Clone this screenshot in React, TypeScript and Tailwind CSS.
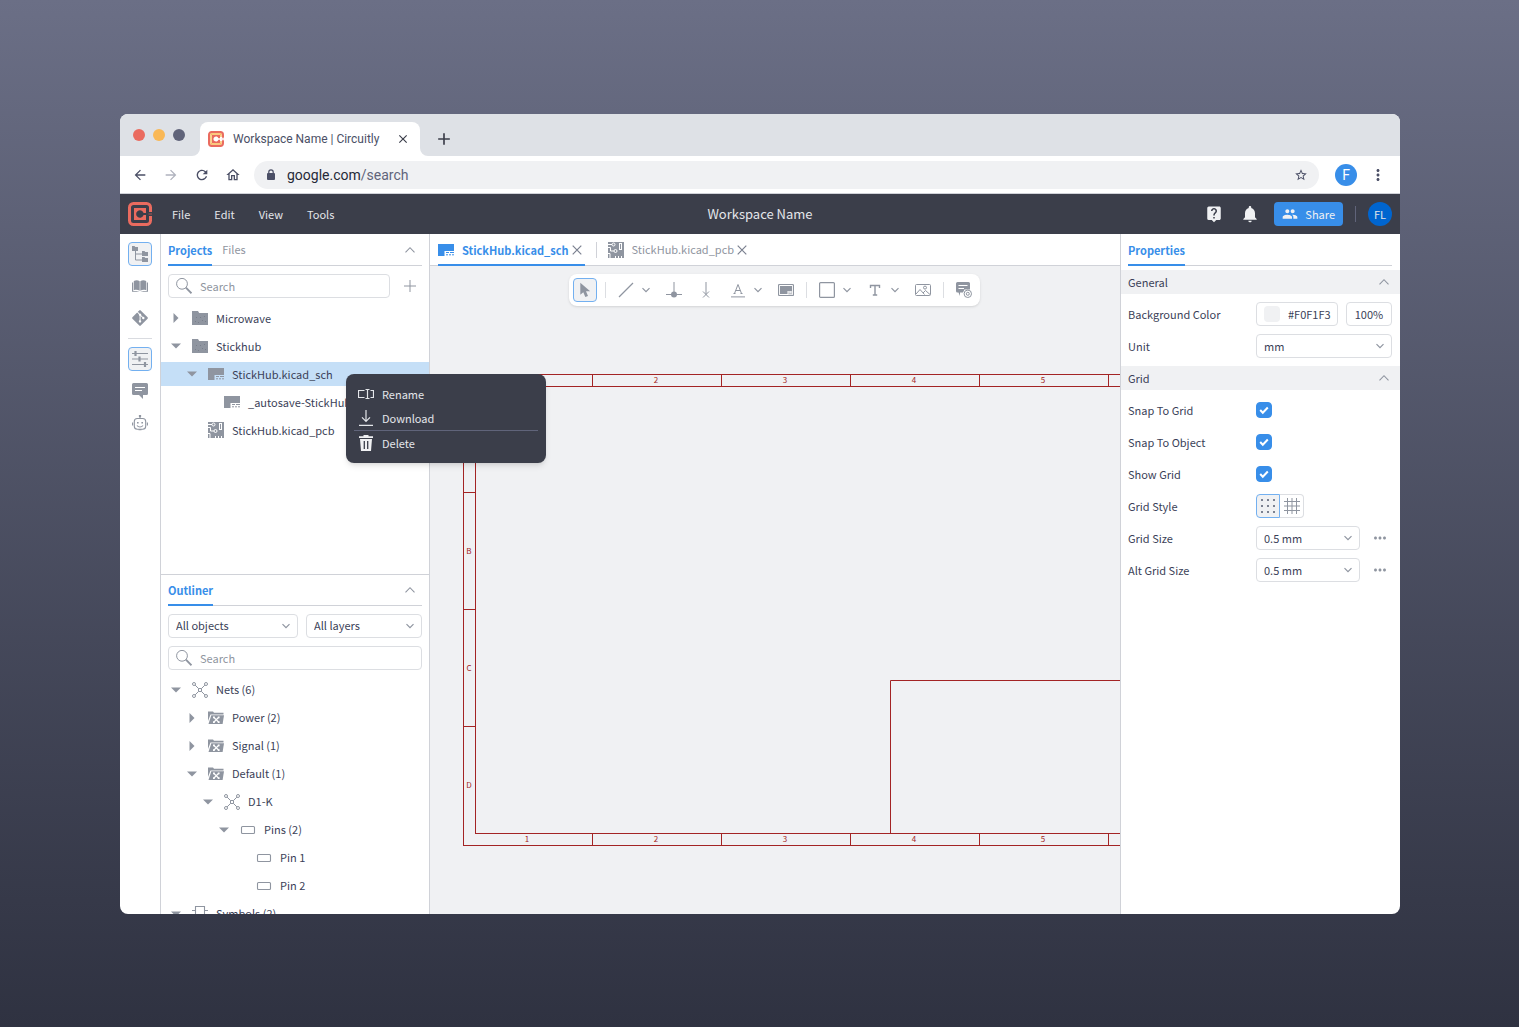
import { useState, type ReactNode } from "react";
import {
  MdAdd,
  MdArrowBack,
  MdArrowForward,
  MdClose,
  MdGroup,
  MdLiveHelp,
  MdMoreHoriz,
  MdMoreVert,
  MdNotifications,
  MdOutlineHome,
  MdRefresh,
  MdStarBorder,
} from "react-icons/md";
import { FaGitAlt } from "react-icons/fa";

type IconProps = { className?: string };

const Logo = ({ className = "size-6", glow = false }: IconProps & { glow?: boolean }) => (
  <svg viewBox="0 0 24 24" fill="none" className={className} aria-hidden="true">
    {glow && <path d="M19.500 9V4.500h-15v15h15V15" stroke="#f9b856" strokeWidth="2" />}
    <path d="M22.500 10V5.500a4 4 0 0 0-4-4h-13a4 4 0 0 0-4 4v13a4 4 0 0 0 4 4h13a4 4 0 0 0 4-4V14" stroke="#ea6b5f" strokeWidth="3" />
    <path d="M6 6h12v5h-2.400a3.800 3.800 0 1 0 0 2H18v5H6z" fill="#ea6b5f" />
    <path d="M20.500 12H24" stroke="#ea6b5f" opacity=".6" />
  </svg>
);

const Chevron = ({ className = "" }: IconProps) => (
  <svg viewBox="0 0 16 16" fill="none" stroke="currentColor" strokeWidth="1.200" className={`size-4 text-[#8f95a0] ${className}`} aria-hidden="true">
    <path d="M4.500 6.200 8 9.700l3.500-3.500" />
  </svg>
);

const ChevronUp = () => (
  <svg viewBox="0 0 16 16" fill="none" stroke="currentColor" strokeWidth="1.100" className="size-4 text-[#8f95a0]" aria-hidden="true">
    <path d="m3.500 10.300 4.500-4.600 4.500 4.600" />
  </svg>
);

const Cross = () => (
  <svg viewBox="0 0 16 16" fill="none" stroke="currentColor" strokeWidth="1.200" className="size-4 text-[#7b8190]" aria-hidden="true">
    <path d="m3.700 3.700 8.600 8.600M12.300 3.700l-8.600 8.600" />
  </svg>
);

const Folder = () => (
  <svg viewBox="0 0 16 16" className="size-4" aria-hidden="true">
    <path d="M0 1h6l1.200 2H16v12H0z" fill="currentColor" />
    <path d="M4 7.500h1M8 7.500h1M12 6.500h1M10 10.500h1M3 11.500h1M6 12.500h1M13 11.500h1" stroke="#6c7280" opacity=".6" />
  </svg>
);

const NetFolder = () => (
  <svg viewBox="0 0 16 16" className="size-4" aria-hidden="true">
    <path d="M0 1.500h5l1 1.300h9.500v1.700H2.500L0 11z" fill="currentColor" />
    <path d="M3.300 5.300H16L14.600 14H.5z" fill="currentColor" />
    <path d="m6 7.500 4.500 4.500M10.500 7.500 6 12" stroke="#fff" strokeWidth="1.200" />
    <path d="M5 6.600h1.800v1.700H5zM9.800 6.600h1.800v1.700H9.800zM5 11.300h1.800V13H5zM9.800 11.300h1.800V13H9.800z" fill="#fff" />
  </svg>
);

const SchFile = () => (
  <svg viewBox="0 0 16 16" className="size-4" aria-hidden="true">
    <path d="M0 2h16v7H6.500v5H0z" fill="currentColor" />
    <path d="M8 10.500h3M12 10.500h4M8 12.800h2M11 12.800h2M14 12.800h2" stroke="currentColor" />
  </svg>
);

const PcbFile = () => (
  <svg viewBox="0 0 16 16" className="size-4" aria-hidden="true">
    <path d="M0 0h16v16H0z" fill="currentColor" />
    <g stroke="#fff" fill="none">
      <path d="M0 2.500h4M0 5.500h2.500v3.500H6M0 11.500h2V16" />
      <circle cx="5.500" cy="2.500" r="1.500" />
      <circle cx="7.500" cy="9" r="1.500" />
      <rect x="11.500" y="1.500" width="2" height="6" />
      <path d="M7.500 14v2M10.500 14v2M13.500 14v2" />
    </g>
  </svg>
);

const Net = () => (
  <svg viewBox="0 0 16 16" fill="none" stroke="currentColor" className="size-4" aria-hidden="true">
    <circle cx="2" cy="2" r="1.500" />
    <circle cx="14" cy="2" r="1.500" />
    <circle cx="2" cy="14" r="1.500" />
    <circle cx="14" cy="14" r="1.500" />
    <path d="M6.500 6.500h3v3h-3zM3.100 3.100l3.400 3.400M12.900 3.100 9.500 6.500M3.100 12.900l3.400-3.400M12.900 12.900 9.500 9.500" />
  </svg>
);

const Pin = () => (
  <svg viewBox="0 0 16 16" fill="none" stroke="currentColor" strokeWidth="1.100" className="size-4" aria-hidden="true">
    <rect x="1.500" y="4.500" width="13" height="7" rx="1" />
  </svg>
);

const SymbolIcon = () => (
  <svg viewBox="0 0 16 16" fill="none" stroke="currentColor" strokeWidth="1.100" className="size-4" aria-hidden="true">
    <path d="M3.500.500h9v15h-9zM0 4.500h3.500M12.500 4.500H16M0 11.500h3.500M12.500 11.500H16" />
  </svg>
);

const Magnifier = () => (
  <svg viewBox="0 0 16 16" fill="none" stroke="currentColor" className="pointer-events-none absolute left-2 top-1 size-4 text-[#8f95a0]" aria-hidden="true">
    <circle cx="6" cy="5.800" r="5.400" />
    <path d="m9.900 9.700 5.600 5.600" strokeWidth="1.900" />
  </svg>
);

const Comment = () => (
  <svg viewBox="0 0 16 16" className="size-4" aria-hidden="true">
    <path d="M1.500 0h13A1.500 1.500 0 0 1 16 1.500v9a1.500 1.500 0 0 1-1.500 1.500H11v4l-4-4H1.500A1.500 1.500 0 0 1 0 10.500v-9A1.500 1.500 0 0 1 1.500 0z" fill="currentColor" />
    <path d="M3 4.500h10M3 7.500h7" stroke="#fff" strokeWidth="1.200" />
  </svg>
);

const railTop = [
  {
    label: "Project tree",
    active: true,
    icon: (
      <svg viewBox="0 0 16 16" fill="currentColor" className="size-4" aria-hidden="true">
        <path d="M0 0h2.500l.8 1H6v4H0zM10 5h2.500l.8 1H16v4h-6zM10 11h2.500l.8 1H16v4h-6z" />
        <path d="M3.500 5v9H10M3.500 8H10" fill="none" stroke="currentColor" />
      </svg>
    ),
  },
  {
    label: "Library",
    icon: (
      <svg viewBox="0 0 16 16" fill="currentColor" className="size-4" aria-hidden="true">
        <path d="M1.800 3C4 2 6 2.200 7.700 3.200v9.600C6 11.800 4 11.600 1.800 12.200zM14.200 3C12 2 10 2.200 8.300 3.200v9.600c1.700-1 3.700-1.200 5.900-.6z" />
        <path d="M0 4.500h1.200v8.600c2.300-.4 4.800-.2 6.300.7H0zM16 4.500h-1.200v8.600c-2.300-.4-4.800-.2-6.300.7H16z" />
      </svg>
    ),
  },
  { label: "Version control", icon: <FaGitAlt className="size-[18px]" /> },
];

const railBottom = [
  {
    label: "Properties",
    active: true,
    icon: (
      <svg viewBox="0 0 16 16" fill="none" stroke="currentColor" className="size-4" aria-hidden="true">
        <path d="M0 2.500h16M0 8h16M0 13.500h16" strokeWidth="1.100" />
        <path d="M3.500 0v5M7.500 5.500v5M13 11v5" strokeWidth="2.200" />
      </svg>
    ),
  },
  { label: "Comments", icon: <Comment /> },
  {
    label: "Assistant",
    icon: (
      <svg viewBox="0 0 16 16" fill="none" stroke="currentColor" strokeWidth="1.100" className="size-4" aria-hidden="true">
        <path d="M8 3.500V1M.6 7.500v3M15.400 7.500v3" />
        <rect x="2.300" y="3.500" width="11.400" height="10.800" rx="3" />
        <circle cx="8" cy="1" r=".7" />
        <path d="M5 10.500c1.500 2 4.500 2 6 0M6.500 14.800h3" />
        <path d="M5 7.800h1.600M9.400 7.800H11" strokeWidth="1.600" />
      </svg>
    ),
  },
];

const RailButton = ({ label, active, icon }: { label: string; active?: boolean; icon: ReactNode }) => (
  <button
    type="button"
    aria-label={label}
    className={`flex size-6 items-center justify-center rounded text-[#8f95a0] ${active ? "border border-[#73b0f0] bg-[#f0f1f3]" : ""}`}>
    {icon}
  </button>
);

const Rail = () => (
  <nav aria-label="Panels" className="flex w-[41px] shrink-0 flex-col gap-2 border-r border-[#d0d2d8] py-2 pl-2">
    {railTop.map((item) => (
      <RailButton key={item.label} {...item} />
    ))}
    <hr className="mr-2 border-[#d9dbe0]" />
    {railBottom.map((item) => (
      <RailButton key={item.label} {...item} />
    ))}
  </nav>
);

const BrowserChrome = () => (
  <div className="shrink-0 font-[Roboto,sans-serif] text-[#4b4f66]">
    <div className="flex h-[42px] items-end bg-[#dee1e6]">
      <div className="flex w-20 gap-2 self-center pl-[13px]">
        <span className="size-3 rounded-full bg-[#ea6b5f]" />
        <span className="size-3 rounded-full bg-[#f9b856]" />
        <span className="size-3 rounded-full bg-[#60647a]" />
      </div>
      <div className="relative flex h-[34px] w-[220px] items-center gap-[9px] rounded-t-lg bg-white px-2 text-[12px]">
        <svg viewBox="0 0 8 8" fill="#fff" className="absolute -left-2 bottom-0 size-2" aria-hidden="true">
          <path d="M8 0v8H0a8 8 0 0 0 8-8z" />
        </svg>
        <svg viewBox="0 0 8 8" fill="#fff" className="absolute -right-2 bottom-0 size-2" aria-hidden="true">
          <path d="M0 0v8h8a8 8 0 0 1-8-8z" />
        </svg>
        <Logo glow className="size-4" />
        <span className="flex-1 whitespace-nowrap">Workspace Name | Circuitly</span>
        <button type="button" aria-label="Close tab" className="mr-0.5">
          <MdClose className="size-[14px] text-[#3b3e4a]" />
        </button>
      </div>
      <button type="button" aria-label="New tab" className="flex h-[34px] w-12 items-center justify-center text-[#3b3e4a]">
        <MdAdd className="size-5" />
      </button>
    </div>
    <div className="flex h-[38px] items-center border-b border-[#d0d2d8] bg-white pl-3 pr-[13px]">
      <div className="flex gap-[15px]">
        <button type="button" aria-label="Back">
          <MdArrowBack className="size-4" />
        </button>
        <button type="button" aria-label="Forward" className="text-[#b0b3be]">
          <MdArrowForward className="size-4" />
        </button>
        <button type="button" aria-label="Reload">
          <MdRefresh className="size-4" />
        </button>
        <button type="button" aria-label="Home">
          <MdOutlineHome className="size-4" />
        </button>
      </div>
      <div className="ml-[13px] flex h-7 flex-1 items-center rounded-full bg-[#f0f1f3] pl-[10px] pr-[11px]">
        <svg viewBox="0 0 14 14" className="size-[14px]" aria-hidden="true">
          <rect x="3" y="5" width="8" height="7" rx="1" fill="currentColor" />
          <path d="M4.800 5.500V4a2.200 2.200 0 0 1 4.400 0v1.500" fill="none" stroke="currentColor" strokeWidth="1.200" />
        </svg>
        <button type="button" className="ml-[9px] flex-1 text-left text-sm text-[#60647a]">
          <span className="text-[#262938]">google.com</span>/search
        </button>
        <button type="button" aria-label="Bookmark">
          <MdStarBorder className="size-[14px]" />
        </button>
      </div>
      <span className="ml-4 flex size-[22px] items-center justify-center rounded-full bg-[#388ee9] text-sm text-white">F</span>
      <button type="button" aria-label="More" className="ml-3">
        <MdMoreVert className="size-[18px]" />
      </button>
    </div>
  </div>
);

const AppHeader = () => (
  <header className="grid h-10 shrink-0 grid-cols-[1fr_auto_1fr] items-center bg-[#3b3e4a] px-2 text-[#e4e6ea]">
    <div className="flex items-center">
      <Logo />
      <nav className="ml-5 flex gap-6">
        {["File", "Edit", "View", "Tools"].map((item) => (
          <button type="button" key={item}>
            {item}
          </button>
        ))}
      </nav>
    </div>
    <h1 className="text-[13px]/4">Workspace Name</h1>
    <div className="flex items-center justify-end">
      <button type="button" aria-label="Help">
        <MdLiveHelp className="size-[18px] text-[#f0f1f3]" />
      </button>
      <button type="button" aria-label="Notifications" className="ml-[17px]">
        <MdNotifications className="size-5 text-[#f0f1f3]" />
      </button>
      <button type="button" className="ml-[14px] flex h-6 items-center gap-[7px] rounded bg-[#388ee9] px-2 text-[#f0f1f3]">
        <MdGroup className="size-4" />
        Share
      </button>
      <span className="mx-3 h-4 w-px bg-[#60647a]" />
      <span className="flex size-6 items-center justify-center rounded-full bg-[#0065cf] text-[#e4e6ea]">FL</span>
    </div>
  </header>
);

const PanelHeader = ({ title, other, className = "h-8" }: { title: string; other?: string; className?: string }) => (
  <div className={`mx-[7px] flex shrink-0 border-b border-[#d0d2d8] ${className}`}>
    <button type="button" className="-mb-px border-b-2 border-[#388ee9] pt-[2px] font-bold text-[#388ee9]">
      {title}
    </button>
    {other && (
      <button type="button" className="ml-2.5 text-[#8f95a0]">
        {other}
      </button>
    )}
    <button type="button" aria-label={`Collapse ${title}`} className="ml-auto mr-1">
      <ChevronUp />
    </button>
  </div>
);

const SearchBox = ({ label }: { label: string }) => (
  <label className="relative block flex-1">
    <Magnifier />
    <input
      type="text"
      aria-label={label}
      placeholder="Search"
      className="block h-6 w-full rounded border border-[#dcdee2] bg-white pl-[31px] pr-2 placeholder:text-[#8f95a0]"
    />
  </label>
);

const Dropdown = ({ label, options, className = "" }: { label: string; options: string[]; className?: string }) => (
  <span className={`relative block ${className}`}>
    <select aria-label={label} className="block h-6 w-full appearance-none rounded border border-[#dcdee2] bg-white pl-[7px] pr-6">
      {options.map((o) => (
        <option key={o}>{o}</option>
      ))}
    </select>
    <Chevron className="pointer-events-none absolute right-1 top-1" />
  </span>
);

const indents = ["pl-[7px]", "pl-[23px]", "pl-[39px]", "pl-[55px]", "pl-[71px]"];

type Row = { text: string; level: number; icon: ReactNode; caret?: "open" | "closed"; selected?: boolean; menu?: boolean };

const TreeRow = ({ row }: { row: Row }) => (
  <li className={`relative flex h-6 items-center gap-2 whitespace-nowrap ${indents[row.level]} ${row.selected ? "bg-[#c5dff7]" : ""}`}>
    <span className="flex size-4 items-center justify-center text-[#8f95a0]">
      {row.caret && (
        <button type="button" aria-label={`Toggle ${row.text}`}>
          <svg viewBox="0 0 16 16" fill="currentColor" className="size-4" aria-hidden="true">
            <path d={row.caret === "open" ? "M3 5.500h10L8 10.500z" : "M5.500 3v10l5-5z"} />
          </svg>
        </button>
      )}
    </span>
    <span className="text-[#8f95a0]">{row.icon}</span>
    <span>{row.text}</span>
    {row.menu && <ContextMenu />}
  </li>
);

const ContextMenu = () => (
  <div role="menu" className="absolute left-[185px] top-3 z-10 w-[200px] rounded-lg bg-[#3b3e4a] p-2 text-[#e4e6ea] shadow-md">
    <button type="button" role="menuitem" className="flex h-6 w-full items-center gap-2 pl-1">
      <svg viewBox="0 0 16 16" fill="none" stroke="currentColor" strokeWidth="1.200" className="size-4" aria-hidden="true">
        <path d="M6.500 4.500h-6v7h6M12.500 4.500h3v7h-3M9.500 3.500v9M7.500 3.500h4M7.500 12.500h4" />
      </svg>
      Rename
    </button>
    <button type="button" role="menuitem" className="flex h-6 w-full items-center gap-2 pl-1">
      <svg viewBox="0 0 16 16" fill="none" stroke="currentColor" strokeWidth="1.200" className="size-4" aria-hidden="true">
        <path d="M8 0v11M4 7.300 8 11.300l4-4M1 15.400h14" />
      </svg>
      Download
    </button>
    <hr className="border-[#60647a]" />
    <button type="button" role="menuitem" className="flex h-6 w-full items-center gap-2 pl-1">
      <svg viewBox="0 0 16 16" className="size-4" aria-hidden="true">
        <path d="M5.500 0h5v1.200H15V3H1V1.200h4.500zM2 4h12l-1 12H3z" fill="#f0f1f3" />
        <path d="M6.300 6v8M9.700 6v8" stroke="#3b3e4a" strokeWidth="1.300" />
      </svg>
      Delete
    </button>
  </div>
);

const projectRows: Row[] = [
  { text: "Microwave", level: 0, icon: <Folder />, caret: "closed" },
  { text: "Stickhub", level: 0, icon: <Folder />, caret: "open" },
  { text: "StickHub.kicad_sch", level: 1, icon: <SchFile />, caret: "open", selected: true, menu: true },
  { text: "_autosave-StickHub.kicad_sch", level: 2, icon: <SchFile /> },
  { text: "StickHub.kicad_pcb", level: 1, icon: <PcbFile /> },
];

const outlineRows: Row[] = [
  { text: "Nets (6)", level: 0, icon: <Net />, caret: "open" },
  { text: "Power (2)", level: 1, icon: <NetFolder />, caret: "closed" },
  { text: "Signal (1)", level: 1, icon: <NetFolder />, caret: "closed" },
  { text: "Default (1)", level: 1, icon: <NetFolder />, caret: "open" },
  { text: "D1-K", level: 2, icon: <Net />, caret: "open" },
  { text: "Pins (2)", level: 3, icon: <Pin />, caret: "open" },
  { text: "Pin 1", level: 4, icon: <Pin /> },
  { text: "Pin 2", level: 4, icon: <Pin /> },
  { text: "Symbols (2)", level: 0, icon: <SymbolIcon />, caret: "open" },
];

const LeftPanel = () => (
  <aside className="flex w-[269px] shrink-0 flex-col border-r border-[#d0d2d8]">
    <section className="min-h-0 flex-1">
      <PanelHeader title="Projects" other="Files" />
      <div className="my-2 ml-[7px] mr-[11px] flex items-center gap-3">
        <SearchBox label="Search projects" />
        <button type="button" aria-label="Add project">
          <svg viewBox="0 0 16 16" stroke="currentColor" className="size-4 text-[#8f95a0]" aria-hidden="true">
            <path d="M8 2v12M2 8h12" />
          </svg>
        </button>
      </div>
      <ul className="flex flex-col gap-1">
        {projectRows.map((row) => (
          <TreeRow key={row.text} row={row} />
        ))}
      </ul>
    </section>
    <section className="min-h-0 flex-1 overflow-hidden border-t border-[#d0d2d8]">
      <PanelHeader title="Outliner" className="h-[31px]" />
      <div className="mx-[7px] my-2 flex flex-col gap-2">
        <div className="flex gap-2">
          <Dropdown label="Objects" options={["All objects", "Nets", "Symbols"]} className="w-[130px]" />
          <Dropdown label="Layers" options={["All layers"]} className="flex-1" />
        </div>
        <SearchBox label="Search outline" />
      </div>
      <ul className="flex flex-col gap-1">
        {outlineRows.map((row) => (
          <TreeRow key={row.text} row={row} />
        ))}
      </ul>
    </section>
  </aside>
);

const ToolButton = ({ label, active, more, children }: { label: string; active?: boolean; more?: boolean; children: ReactNode }) => (
  <div className="flex items-center">
    <button
      type="button"
      aria-label={label}
      className={`flex size-6 items-center justify-center rounded ${active ? "border border-[#73b0f0] bg-[#f0f1f3]" : ""}`}>
      <svg viewBox="0 0 16 16" fill="none" stroke="currentColor" className="size-4" aria-hidden="true">
        {children}
      </svg>
    </button>
    {more && (
      <button type="button" aria-label={`${label} options`}>
        <Chevron />
      </button>
    )}
  </div>
);

const Separator = () => <span className="h-4 w-px bg-[#dcdee2]" />;

const Toolbar = () => (
  <div role="toolbar" className="relative flex h-8 items-center gap-2 rounded-lg bg-white px-1 text-[#8f95a0] shadow-sm">
    <ToolButton label="Select" active>
      <path d="M3.300.800v12l3-2.500 2 4.700 2.700-1.100-2-4.600h4.200z" fill="currentColor" stroke="none" />
    </ToolButton>
    <Separator />
    <ToolButton label="Line" more>
      <path d="M1 15 15 1" strokeWidth="1.200" />
    </ToolButton>
    <ToolButton label="Junction">
      <path d="M8 0v12M0 12.500h16" />
      <circle cx="8" cy="12.500" r="3" fill="currentColor" stroke="none" />
    </ToolButton>
    <ToolButton label="No connect">
      <path d="M8 0v12.500M5 9.500l6 6M11 9.500l-6 6" />
    </ToolButton>
    <ToolButton label="Label" more>
      <path d="M4.500 11.500 8 2.500l3.500 9M5.800 8.500h4.400M3.500 11.500h2M10.500 11.500h2M1 14.900h14" />
    </ToolButton>
    <ToolButton label="Sheet">
      <rect x=".5" y="2.500" width="15" height="11" rx="1" strokeWidth="1.200" />
      <path d="M2 4h12v5H9.500v3H2z" fill="currentColor" stroke="none" />
      <path d="M10.300 10h1.500M12.500 10H14M10.300 11.800H14" strokeWidth=".8" />
    </ToolButton>
    <Separator />
    <ToolButton label="Rectangle" more>
      <rect x=".6" y=".6" width="14.800" height="14.800" rx="1" strokeWidth="1.200" />
    </ToolButton>
    <ToolButton label="Text" more>
      <path d="M3.500 6V3.500h9V6M8 3.500v9.500M5.800 13h4.400" strokeWidth="1.400" />
    </ToolButton>
    <ToolButton label="Image">
      <rect x=".5" y="2.500" width="15" height="11" rx="1" />
      <circle cx="10" cy="5.600" r="1.500" />
      <path d="m1 12 4-4.500 4.500 5M8 11l2.500-2.500 4.500 4" />
    </ToolButton>
    <Separator />
    <ToolButton label="Comment">
      <path d="M1.500 0h11A1.500 1.500 0 0 1 14 1.500v6H8.500L7 10.500H4V14l-1.500-3.500h-1A1.500 1.500 0 0 1 0 9V1.500A1.500 1.500 0 0 1 1.500 0z" fill="currentColor" stroke="none" />
      <path d="M2.500 3.500h9M2.500 6.500H8" stroke="#fff" />
      <circle cx="11.800" cy="11.800" r="3.700" fill="#fff" />
      <circle cx="11.800" cy="11.800" r="1.500" />
    </ToolButton>
  </div>
);

const columns = [1, 2, 3, 4, 5, 6, 7, 8, 9, 10];
const rows = ["A", "B", "C", "D"];

const Sheet = () => (
  <svg className="absolute inset-0 size-full" fill="none" stroke="#a32424" aria-hidden="true">
    <rect x="33.500" y="108.500" width="1302" height="471" />
    <rect x="45.500" y="120.500" width="1278" height="447" />
    <path d="M460.500 567.500v-153h863" />
    {columns.map((n) => (
      <g key={n}>
        <path d={`M${33.5 + n * 129} 108.500v12M${33.5 + n * 129} 567.500v12`} />
        <text x={n * 129 - 32} y="117" fontSize="8" textAnchor="middle" fill="#a32424" stroke="none">
          {n}
        </text>
        <text x={n * 129 - 32} y="576" fontSize="8" textAnchor="middle" fill="#a32424" stroke="none">
          {n}
        </text>
      </g>
    ))}
    {rows.map((r, i) => (
      <g key={r}>
        {i > 0 && <path d={`M33.500 ${109.5 + i * 117}h12`} />}
        <text x="39" y={171 + i * 117} fontSize="8" textAnchor="middle" fill="#a32424" stroke="none">
          {r}
        </text>
      </g>
    ))}
  </svg>
);

const Editor = () => (
  <main className="flex min-w-0 flex-1 flex-col">
    <div className="flex h-8 shrink-0 items-center border-b border-[#d0d2d8] px-2">
      <div className="-mb-px flex h-8 items-center gap-2 border-b-2 border-[#388ee9] pt-[2px] font-bold text-[#388ee9]">
        <SchFile />
        <button type="button">StickHub.kicad_sch</button>
        <button type="button" aria-label="Close StickHub.kicad_sch" className="-ml-2">
          <Cross />
        </button>
      </div>
      <span className="mx-[11px] h-4 w-px bg-[#d0d2d8]" />
      <div className="flex items-center gap-2 text-[#8f95a0]">
        <PcbFile />
        <button type="button">StickHub.kicad_pcb</button>
        <button type="button" aria-label="Close StickHub.kicad_pcb" className="-ml-2">
          <Cross />
        </button>
      </div>
    </div>
    <div className="relative flex flex-1 items-start justify-center overflow-hidden bg-[#f0f1f3] pr-0.5 pt-2">
      <Sheet />
      <Toolbar />
    </div>
  </main>
);

const SectionTitle = ({ title }: { title: string }) => (
  <div className="flex h-6 items-center justify-between bg-[#f0f1f3] pl-[7px] pr-2">
    <h2>{title}</h2>
    <button type="button" aria-label={`Collapse ${title}`}>
      <ChevronUp />
    </button>
  </div>
);

const Field = ({ label, children }: { label: string; children: ReactNode }) => (
  <div className="flex h-6 items-center pl-[7px] pr-2">
    <span className="w-32 shrink-0">{label}</span>
    {children}
  </div>
);

const Check = ({ label }: { label: string }) => {
  const [on, setOn] = useState(true);
  return (
    <label className="flex h-6 items-center pl-[7px] pr-2">
      <span className="w-32 shrink-0">{label}</span>
      <span className="relative size-4">
        <input
          type="checkbox"
          checked={on}
          onChange={() => setOn(!on)}
          className="block size-4 appearance-none rounded border border-[#d0d2d8] checked:border-[#388ee9] checked:bg-[#388ee9]"
        />
        <svg viewBox="0 0 16 16" fill="none" stroke="#fff" strokeWidth="2" className="pointer-events-none absolute inset-0 size-4" aria-hidden="true">
          <path d="m4.200 8 2.600 2.700 5-5.200" />
        </svg>
      </span>
    </label>
  );
};

const MoreButton = ({ label }: { label: string }) => (
  <button type="button" aria-label={label} className="ml-[11px] text-[#8f95a0]">
    <MdMoreHoriz className="size-[18px]" />
  </button>
);

const Properties = () => (
  <aside className="flex w-[280px] shrink-0 flex-col border-l border-[#d0d2d8]">
    <div className="ml-[7px] mr-2 flex h-8 border-b border-[#d0d2d8]">
      <button type="button" className="-mb-px border-b-2 border-[#388ee9] pt-[2px] font-bold text-[#388ee9]">
        Properties
      </button>
    </div>
    <div className="mt-1 flex flex-col gap-2">
      <SectionTitle title="General" />
      <Field label="Background Color">
        <span className="relative">
          <span className="absolute left-2 top-1 size-4 rounded bg-[#f0f1f3]" />
          <input type="text" aria-label="Background color" defaultValue="#F0F1F3" className="block h-6 w-[82px] rounded border border-[#dcdee2] pl-[31px]" />
        </span>
        <input type="text" aria-label="Opacity" defaultValue="100%" className="ml-2 h-6 w-[46px] rounded border border-[#dcdee2] text-center" />
      </Field>
      <Field label="Unit">
        <Dropdown label="Unit" options={["mm", "mil", "inch"]} className="flex-1" />
      </Field>
      <SectionTitle title="Grid" />
      <Check label="Snap To Grid" />
      <Check label="Snap To Object" />
      <Check label="Show Grid" />
      <Field label="Grid Style">
        <button type="button" aria-label="Dots" className="flex size-6 items-center justify-center rounded-l border border-[#73b0f0] bg-[#f0f1f3] text-[#7b8190]">
          <svg viewBox="0 0 16 16" fill="currentColor" className="size-4" aria-hidden="true">
            <path d="M1 1h2v2H1zM7 1h2v2H7zM13 1h2v2h-2zM1 7h2v2H1zM7 7h2v2H7zM13 7h2v2h-2zM1 13h2v2H1zM7 13h2v2H7zM13 13h2v2h-2z" />
          </svg>
        </button>
        <button type="button" aria-label="Lines" className="flex size-6 items-center justify-center rounded-r border border-l-0 border-[#dcdee2] text-[#8f95a0]">
          <svg viewBox="0 0 16 16" fill="none" stroke="currentColor" className="size-4" aria-hidden="true">
            <path d="M3.500 0v16M8 0v16M12.500 0v16M0 3.500h16M0 8h16M0 12.500h16" />
          </svg>
        </button>
      </Field>
      <Field label="Grid Size">
        <Dropdown label="Grid size" options={["0.5 mm", "1 mm"]} className="w-[104px]" />
        <MoreButton label="Grid size options" />
      </Field>
      <Field label="Alt Grid Size">
        <Dropdown label="Alt grid size" options={["0.5 mm", "1 mm"]} className="w-[104px]" />
        <MoreButton label="Alt grid size options" />
      </Field>
    </div>
  </aside>
);

export default function App() {
  return (
    <div className="h-screen bg-linear-to-b from-[#6b6f86] to-[#2f3241] pb-[113px] pl-[120px] pr-[119px] pt-[114px] font-['Noto_Sans_CJK_SC',sans-serif] text-[11px] leading-[15px] text-[#3b3f58]">
      <div className="flex h-full flex-col overflow-hidden rounded-lg bg-white">
        <BrowserChrome />
        <AppHeader />
        <div className="flex min-h-0 flex-1">
          <Rail />
          <LeftPanel />
          <Editor />
          <Properties />
        </div>
      </div>
    </div>
  );
}
